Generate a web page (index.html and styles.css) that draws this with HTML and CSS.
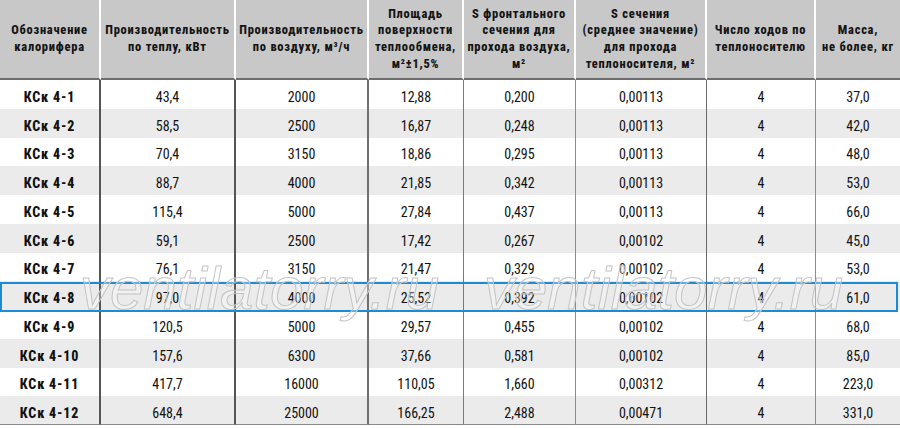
FILE: index.html
```html
<!DOCTYPE html>
<html lang="ru">
<head>
<meta charset="utf-8">
<title>КСк 4</title>
<link rel="stylesheet" href="styles.css">
</head>
<body>
<div class="sheet">
  <table class="spec">
    <colgroup>
      <col class="c1"><col class="c2"><col class="c3"><col class="c4"><col class="c5"><col class="c6"><col class="c7"><col class="c8">
    </colgroup>
    <thead>
      <tr>
        <th>Обозначение<br>калорифера</th>
        <th>Производительность<br>по теплу, кВт</th>
        <th>Производительность<br>по воздуху, м³/ч</th>
        <th>Площадь<br>поверхности<br>теплообмена,<br>м²±1,5%</th>
        <th>S фронтального<br>сечения для<br>прохода воздуха,<br>м²</th>
        <th>S сечения<br>(среднее значение)<br>для прохода<br>теплоносителя, м²</th>
        <th>Число ходов по<br>теплоносителю</th>
        <th>Масса,<br>не более, кг</th>
      </tr>
    </thead>
    <tbody>
      <tr><td>КСк 4-1</td><td>43,4</td><td>2000</td><td>12,88</td><td>0,200</td><td>0,00113</td><td>4</td><td>37,0</td></tr>
      <tr><td>КСк 4-2</td><td>58,5</td><td>2500</td><td>16,87</td><td>0,248</td><td>0,00113</td><td>4</td><td>42,0</td></tr>
      <tr><td>КСк 4-3</td><td>70,4</td><td>3150</td><td>18,86</td><td>0,295</td><td>0,00113</td><td>4</td><td>48,0</td></tr>
      <tr><td>КСк 4-4</td><td>88,7</td><td>4000</td><td>21,85</td><td>0,342</td><td>0,00113</td><td>4</td><td>53,0</td></tr>
      <tr><td>КСк 4-5</td><td>115,4</td><td>5000</td><td>27,84</td><td>0,437</td><td>0,00113</td><td>4</td><td>66,0</td></tr>
      <tr><td>КСк 4-6</td><td>59,1</td><td>2500</td><td>17,42</td><td>0,267</td><td>0,00102</td><td>4</td><td>45,0</td></tr>
      <tr><td>КСк 4-7</td><td>76,1</td><td>3150</td><td>21,47</td><td>0,329</td><td>0,00102</td><td>4</td><td>53,0</td></tr>
      <tr><td>КСк 4-8</td><td>97,0</td><td>4000</td><td>25,52</td><td>0,392</td><td>0,00102</td><td>4</td><td>61,0</td></tr>
      <tr><td>КСк 4-9</td><td>120,5</td><td>5000</td><td>29,57</td><td>0,455</td><td>0,00102</td><td>4</td><td>68,0</td></tr>
      <tr><td>КСк 4-10</td><td>157,6</td><td>6300</td><td>37,66</td><td>0,581</td><td>0,00102</td><td>4</td><td>85,0</td></tr>
      <tr><td>КСк 4-11</td><td>417,7</td><td>16000</td><td>110,05</td><td>1,660</td><td>0,00312</td><td>4</td><td>223,0</td></tr>
      <tr><td>КСк 4-12</td><td>648,4</td><td>25000</td><td>166,25</td><td>2,488</td><td>0,00471</td><td>4</td><td>331,0</td></tr>
    </tbody>
  </table>
  <div class="hl-box"></div>
  <div class="wm wm-left">ventilatorry.ru</div>
  <div class="wm wm-right">ventilatorry.ru</div>
</div>
</body>
</html>
```
FILE: styles.css
```css
html, body {
  margin: 0;
  padding: 0;
  background: #ffffff;
}

.sheet {
  position: relative;
  width: 900px;
  height: 428px;
  overflow: hidden;
}

.spec {
  width: 900px;
  table-layout: fixed;
  border-collapse: separate;
  border-spacing: 0;
  font-family: "Roboto Condensed", "Roboto", "Liberation Sans", Arial, sans-serif;
  font-stretch: 75%;
  color: #111111;
}

.c1 { width: 101px; }
.c2 { width: 135px; }
.c3 { width: 133px; }
.c4 { width: 95px; }
.c5 { width: 112px; }
.c6 { width: 131px; }
.c7 { width: 109px; }
.c8 { width: 84px; }

.spec th {
  height: 80px;
  padding: 0;
  box-sizing: border-box;
  background: #c8c8c8;
  border-bottom: 2px solid #6e6e6e;
  border-right: 2px solid #ffffff;
  font-weight: 800;
  font-size: 12.5px;
  letter-spacing: 0.75px;
  line-height: 16.6px;
  text-align: center;
  vertical-align: middle;
  white-space: nowrap;
  color: #151515;
}

.spec th:last-child { border-right: 0; }

.spec td {
  height: 28.75px;
  padding: 5px 0 0;
  box-sizing: border-box;
  font-size: 14px;
  line-height: 16px;
  text-align: center;
  vertical-align: middle;
  white-space: nowrap;
  border-right: 1px solid #8a8a8a;
}

.spec td:first-child {
  font-weight: 800;
  font-size: 14px;
  letter-spacing: 0.8px;
  border-right: 2px solid #555555;
}
.spec td:nth-child(2) { border-right: 2px solid #555555; }
.spec td:nth-child(3) { border-right: 2px solid #6f6f6f; }
.spec td:nth-child(4) { border-right: 1px solid #7a7a7a; }
.spec td:nth-child(5) { border-right: 1px solid #8c8c8c; }
.spec td:nth-child(6) { border-right: 1px solid #6a6a6a; }
.spec td:nth-child(7) { border-right: 1px solid #8c8c8c; }
.spec td:last-child { border-right: 0; }

.spec tbody tr:nth-child(even) td { background: #ebebeb; }
.spec tbody tr:last-child td { border-bottom: 1px solid #8a8a8a; }

.hl-box {
  position: absolute;
  left: 0;
  top: 282px;
  width: 898px;
  height: 30px;
  box-sizing: border-box;
  border: 2px solid #1d8ad2;
  pointer-events: none;
}

.wm {
  position: absolute;
  top: 259px;
  font-family: "Liberation Sans", Arial, sans-serif;
  font-style: italic;
  font-size: 60px;
  line-height: 60px;
  white-space: nowrap;
  color: rgba(255, 255, 255, 0.3);
  -webkit-text-stroke: 1px #c4c4c4;
  pointer-events: none;
}
.wm-left { left: 80px; }
.wm-right { left: 484px; }
```
